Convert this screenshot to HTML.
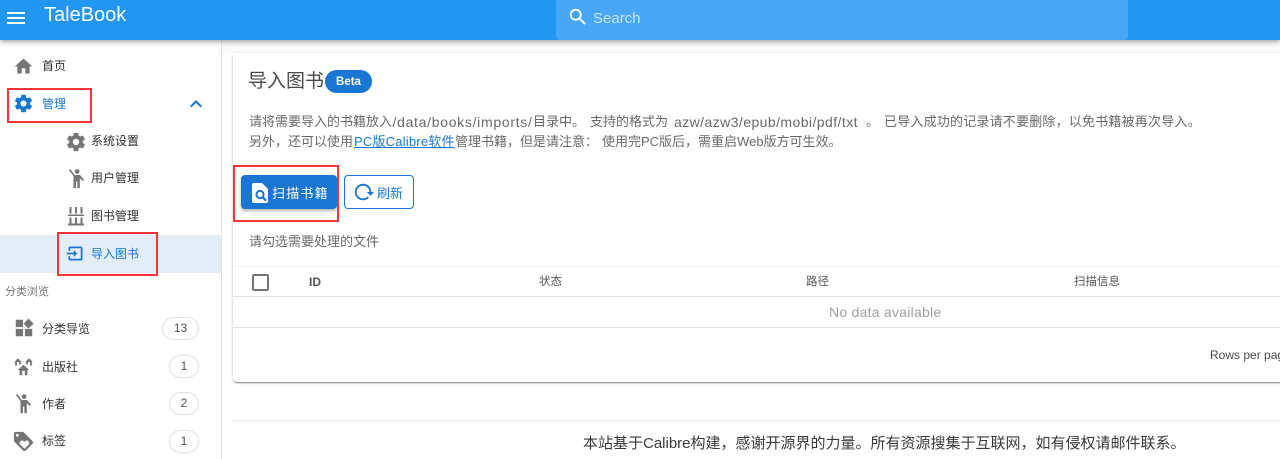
<!DOCTYPE html>
<html lang="zh"><head><meta charset="utf-8"><title>TaleBook</title>
<style>
html,body{margin:0;padding:0;width:1280px;height:459px;overflow:hidden;background:#fff;font-family:"Liberation Sans","Noto Sans CJK SC",sans-serif;}
.a{position:absolute;white-space:nowrap;line-height:1;}
svg.i{position:absolute;width:24px;height:24px;fill:#757575;}
svg.b{fill:#1976d2;}
.t{font-size:12px;color:rgba(0,0,0,.82);}
.tb{font-size:12px;color:#1976d2;}
.c{position:absolute;box-sizing:border-box;border:1px solid #e0e0e0;border-radius:12px;height:23px;line-height:21px;text-align:center;font-size:12px;color:rgba(0,0,0,.7);background:#fff;}
.red{position:absolute;border:2px solid #f33;box-sizing:border-box;}
.th{font-size:11.5px;color:rgba(0,0,0,.68);}
.d{font-size:13px;color:rgba(0,0,0,.6);}
</style></head><body>

<div class="a" style="left:0;top:40px;width:1280px;height:13px;background:#fafafa"></div>

<!-- sidebar -->
<div class="a" style="left:0;top:40px;width:221px;height:419px;background:#fff;border-right:1px solid #e4e4e4"></div>
<div class="a" style="left:0;top:235px;width:221px;height:38px;background:#e3edf8"></div>

<svg class="i" style="left:13px;top:56px;width:21px;height:21px" viewBox="0 0 24 24"><path d="M10,20V14H14V20H19V12H22L12,3L2,12H5V20H10Z"/></svg>
<div class="a t" style="left:42px;top:60px">首页</div>

<svg class="i b" style="left:13px;top:93px;width:21px;height:21px" viewBox="0 0 24 24"><path d="M12,15.5A3.5,3.5 0 0,1 8.5,12A3.5,3.5 0 0,1 12,8.5A3.5,3.5 0 0,1 15.5,12A3.5,3.5 0 0,1 12,15.5M19.43,12.97C19.47,12.65 19.5,12.33 19.5,12C19.5,11.67 19.47,11.34 19.43,11L21.54,9.37C21.73,9.22 21.78,8.95 21.66,8.73L19.66,5.27C19.54,5.05 19.27,4.96 19.05,5.05L16.56,6.05C16.04,5.66 15.5,5.32 14.87,5.07L14.5,2.42C14.46,2.18 14.25,2 14,2H10C9.75,2 9.54,2.18 9.5,2.42L9.13,5.07C8.5,5.32 7.96,5.66 7.44,6.05L4.95,5.05C4.73,4.96 4.46,5.05 4.34,5.27L2.34,8.73C2.21,8.95 2.27,9.22 2.46,9.37L4.57,11C4.53,11.34 4.5,11.67 4.5,12C4.5,12.33 4.53,12.65 4.57,12.97L2.46,14.63C2.27,14.78 2.21,15.05 2.34,15.27L4.34,18.73C4.46,18.95 4.73,19.03 4.95,18.95L7.44,17.94C7.96,18.34 8.5,18.68 9.13,18.93L9.5,21.58C9.54,21.82 9.75,22 10,22H14C14.25,22 14.46,21.82 14.5,21.58L14.87,18.93C15.5,18.67 16.04,18.34 16.56,17.94L19.05,18.95C19.27,19.03 19.54,18.95 19.66,18.73L21.66,15.27C21.78,15.05 21.73,14.78 21.54,14.63L19.43,12.97Z"/></svg>
<div class="a tb" style="left:42px;top:98px">管理</div>
<svg class="i b" style="left:184px;top:92px" viewBox="0 0 24 24"><path d="M7.41,15.41L12,10.83L16.59,15.41L18,14L12,8L6,14L7.41,15.41Z"/></svg>

<svg class="i" style="left:65px;top:131px;width:22px;height:22px" viewBox="0 0 24 24"><path d="M12,15.5A3.5,3.5 0 0,1 8.5,12A3.5,3.5 0 0,1 12,8.5A3.5,3.5 0 0,1 15.5,12A3.5,3.5 0 0,1 12,15.5M19.43,12.97C19.47,12.65 19.5,12.33 19.5,12C19.5,11.67 19.47,11.34 19.43,11L21.54,9.37C21.73,9.22 21.78,8.95 21.66,8.73L19.66,5.27C19.54,5.05 19.27,4.96 19.05,5.05L16.56,6.05C16.04,5.66 15.5,5.32 14.87,5.07L14.5,2.42C14.46,2.18 14.25,2 14,2H10C9.75,2 9.54,2.18 9.5,2.42L9.13,5.07C8.5,5.32 7.96,5.66 7.44,6.05L4.95,5.05C4.73,4.96 4.46,5.05 4.34,5.27L2.34,8.73C2.21,8.95 2.27,9.22 2.46,9.37L4.57,11C4.53,11.34 4.5,11.67 4.5,12C4.5,12.33 4.53,12.65 4.57,12.97L2.46,14.63C2.27,14.78 2.21,15.05 2.34,15.27L4.34,18.73C4.46,18.95 4.73,19.03 4.95,18.95L7.44,17.94C7.96,18.34 8.5,18.68 9.13,18.93L9.5,21.58C9.54,21.82 9.75,22 10,22H14C14.25,22 14.46,21.82 14.5,21.58L14.87,18.93C15.5,18.67 16.04,18.34 16.56,17.94L19.05,18.95C19.27,19.03 19.54,18.95 19.66,18.73L21.66,15.27C21.78,15.05 21.73,14.78 21.54,14.63L19.43,12.97Z"/></svg>
<div class="a t" style="left:91px;top:135px">系统设置</div>

<svg class="i" style="left:66px;top:168px;width:21px;height:21px" viewBox="0 0 24 24"><path d="M4.8,1.2L3.4,2.4L8.6,9.4V23H11.4V15.5H13V23H15.8V11.6L19.2,14.8L20.6,13.4L16,8H9.8ZM12.7,1.4A2.7,2.7 0 1,0 12.71,6.8A2.7,2.7 0 1,0 12.7,1.4Z"/></svg>
<div class="a t" style="left:91px;top:172px">用户管理</div>

<svg class="i" style="left:66px;top:206px;width:20px;height:20px" viewBox="0 0 20 20"><path d="M3.5,1H5.5V7.5H3.5ZM9,1H11V7.5H9ZM14.5,1H16.5V7.5H14.5ZM2,8.5H18V10H2ZM3.5,11.5H5.5V18H3.5ZM9,11.5H11V18H9ZM14.5,11.5H16.5V18H14.5ZM2,17.5H18V19.5H2Z"/></svg>
<div class="a t" style="left:91px;top:210px">图书管理</div>

<svg class="i b" style="left:65px;top:243px;width:21px;height:21px" viewBox="0 0 24 24"><path d="M14,12L10,8V11H2V13H10V16M20,18V6C20,4.89 19.1,4 18,4H6A2,2 0 0,0 4,6V9H6V6H18V18H6V15H4V18A2,2 0 0,0 6,20H18A2,2 0 0,0 20,18Z"/></svg>
<div class="a tb" style="left:91px;top:248px">导入图书</div>

<div class="a" style="left:5px;top:287px;font-size:11px;color:rgba(0,0,0,.55)">分类浏览</div>

<svg class="i" style="left:13px;top:317px;width:22px;height:22px" viewBox="0 0 24 24"><path d="M3,3H11V11H3V3M3,13H11V21H3V13M13,13H21V21H13V13M16.8,1.7L22.5,7.3L16.8,12.5L11.6,7.3Z"/></svg>
<div class="a t" style="left:42px;top:323px">分类导览</div>
<div class="c" style="left:162px;top:317px;width:37px">13</div>

<svg class="i" style="left:13px;top:356px;width:21px;height:21px" viewBox="0 0 24 24"><path d="M18.5,16H16.5V22H13.5V17H10.5V22H7.5V16H5.5L12,10ZM5.5,2.5L10,7H9V9.5H7V7H4.5V11H2.5V7H1.5ZM18.5,2.5L22.5,7H21.5V11H19.5V7H17V9.5H15V7H14Z"/></svg>
<div class="a t" style="left:42px;top:361px">出版社</div>
<div class="c" style="left:169px;top:355px;width:30px">1</div>

<svg class="i" style="left:13px;top:393px;width:21px;height:21px" viewBox="0 0 24 24"><path d="M4.8,1.2L3.4,2.4L8.6,9.4V23H11.4V15.5H13V23H15.8V11.6L19.2,14.8L20.6,13.4L16,8H9.8ZM12.7,1.4A2.7,2.7 0 1,0 12.71,6.8A2.7,2.7 0 1,0 12.7,1.4Z"/></svg>
<div class="a t" style="left:42px;top:398px">作者</div>
<div class="c" style="left:169px;top:392px;width:30px">2</div>

<svg class="i" style="left:12px;top:430px;width:23px;height:23px" viewBox="0 0 24 24"><path d="M21.41,11.58L12.41,2.58A2,2 0 0,0 11,2H4A2,2 0 0,0 2,4V11A2,2 0 0,0 2.59,12.42L11.59,21.42A2,2 0 0,0 13,22A2,2 0 0,0 14.41,21.41L21.41,14.41A2,2 0 0,0 22,13A2,2 0 0,0 21.41,11.58M5.5,7A1.5,1.5 0 1,1 7,5.5A1.5,1.5 0 0,1 5.5,7M17.27,15.27L13,19.54L8.73,15.27A2.5,2.5 0 0,1 12.27,11.73L13,12.46L13.73,11.73A2.5,2.5 0 0,1 17.27,15.27Z"/></svg>
<div class="a t" style="left:42px;top:435px">标签</div>
<div class="c" style="left:169px;top:430px;width:30px">1</div>

<!-- card -->
<div class="a" style="left:233px;top:53px;width:1060px;height:329px;background:#fff;border-radius:4px;box-shadow:0 2px 1px -1px rgba(0,0,0,.3),0 1px 2px rgba(0,0,0,.25),0 0 2px rgba(0,0,0,.08)"></div>

<div class="a" style="left:248px;top:72px;font-size:19px;color:rgba(0,0,0,.72)">导入图书</div>
<div class="a" style="left:325px;top:70px;width:47px;height:23px;border-radius:12px;background:#1976d2;color:#fff;font-size:11.5px;font-weight:700;line-height:24px;text-align:center">Beta</div>

<div class="a d" style="left:249px;top:115px">请将需要导入的书籍放入</div>
<div class="a d" style="left:392.5px;top:115px;letter-spacing:.7px;font-size:14px">/data/books/imports/</div>
<div class="a d" style="left:533px;top:115px">目录中。</div>
<div class="a d" style="left:590px;top:115px">支持的格式为</div>
<div class="a d" style="left:674px;top:115px;font-size:14px;letter-spacing:.43px">azw/azw3/epub/mobi/pdf/txt</div>
<div class="a d" style="left:866px;top:115px">。</div>
<div class="a d" style="left:884px;top:115px;letter-spacing:.2px">已导入成功的记录请不要删除，以免书籍被再次导入。</div>

<div class="a d" style="left:249px;top:135px">另外，还可以使用</div>
<div class="a d" style="left:354px;top:135px;color:#1976d2;text-decoration:underline;letter-spacing:.2px">PC版Calibre软件</div>
<div class="a d" style="left:455px;top:135px">管理书籍，但是请注意：</div>
<div class="a d" style="left:602px;top:135px">使用完PC版后，需重启Web版方可生效。</div>

<!-- buttons -->
<div class="a" style="left:241px;top:175px;width:96px;height:34px;border-radius:4px;background:#1976d2;box-shadow:0 2px 3px rgba(0,0,0,.3)"></div>
<svg class="i" style="left:248px;top:181px" viewBox="0 0 24 24"><path fill="#fff" d="M14,2H6A2,2 0 0,0 4,4V20A2,2 0 0,0 6,22H18A2,2 0 0,0 20,20V8Z"/><circle cx="12" cy="13.5" r="3.6" fill="none" stroke="#1976d2" stroke-width="2"/><path d="M14.6,16.2L18,19.6" stroke="#1976d2" stroke-width="2.2" fill="none"/></svg>
<div class="a" style="left:272px;top:187px;font-size:13px;color:#fff;letter-spacing:1.2px">扫描书籍</div>

<div class="a" style="left:344px;top:175px;width:68px;height:32px;border:1px solid #1976d2;border-radius:4px;background:#fff"></div>
<svg class="i b" style="left:353px;top:181px;width:22px;height:22px" viewBox="0 0 24 24"><path d="M2,12C2,16.97 6.03,21 11,21C13.39,21 15.68,20.06 17.4,18.4L15.9,16.9C14.63,18.25 12.86,19 11,19C4.76,19 1.64,11.46 6.05,7.05C10.46,2.64 18,5.77 18,12H15L19,16H19.1L23,12H20C20,7.03 15.97,3 11,3C6.03,3 2,7.03 2,12Z"/></svg>
<div class="a" style="left:377px;top:187px;font-size:13px;color:#1976d2">刷新</div>

<div class="a d" style="left:249px;top:235px">请勾选需要处理的文件</div>

<!-- table -->
<div class="a" style="left:233px;top:266px;width:1047px;height:1px;background:#f3f3f3"></div>
<div class="a" style="left:233px;top:296px;width:1047px;height:1px;background:#e0e0e0"></div>
<div class="a" style="left:233px;top:327px;width:1047px;height:1px;background:#e0e0e0"></div>
<div class="a" style="left:252px;top:274px;width:13px;height:13px;border:2px solid #757575;border-radius:2px"></div>
<div class="a th" style="left:309px;top:276px;font-weight:700;font-size:12px">ID</div>
<div class="a th" style="left:539px;top:277px">状态</div>
<div class="a th" style="left:806px;top:277px">路径</div>
<div class="a th" style="left:1074px;top:277px">扫描信息</div>
<div class="a" style="left:829px;top:305px;font-size:14px;letter-spacing:.25px;color:rgba(0,0,0,.38)">No data available</div>
<div class="a" style="left:1210px;top:349px;font-size:12px;color:rgba(0,0,0,.72)">Rows per page</div>

<!-- footer -->
<div class="a" style="left:233px;top:420px;width:1047px;height:1px;background:#e8e8e8"></div>
<div class="a" style="left:583px;top:436px;font-size:15px;color:rgba(0,0,0,.78)">本站基于Calibre构建，感谢开源界的力量。所有资源搜集于互联网，如有侵权请邮件联系。</div>

<!-- app bar -->
<div class="a" style="left:0;top:0;width:1280px;height:40px;background:#2196f3;box-shadow:0 2px 4px -1px rgba(0,0,0,.3),0 4px 5px rgba(0,0,0,.1)"></div>
<svg class="i" style="left:4px;top:6px;fill:#fff" viewBox="0 0 24 24"><path d="M3,6H21V8H3V6M3,11H21V13H3V11M3,16H21V18H3V16Z"/></svg>
<div class="a" style="left:44px;top:5px;font-size:20px;color:#fff">TaleBook</div>
<div class="a" style="left:556px;top:0;width:572px;height:40px;background:#47a6f6;border-radius:0 0 4px 4px"></div>
<svg class="i" style="left:567px;top:6px;fill:#fff;width:22px;height:22px" viewBox="0 0 24 24"><path d="M9.5,3A6.5,6.5 0 0,1 16,9.5C16,11.11 15.41,12.59 14.44,13.73L14.71,14H15.5L20.5,19L19,20.5L14,15.5V14.71L13.73,14.44C12.59,15.41 11.11,16 9.5,16A6.5,6.5 0 0,1 3,9.5A6.5,6.5 0 0,1 9.5,3M9.5,5C7,5 5,7 5,9.5C5,12 7,14 9.5,14C12,14 14,12 14,9.5C14,7 12,5 9.5,5Z"/></svg>
<div class="a" style="left:593px;top:11px;font-size:15px;color:rgba(255,255,255,.7)">Search</div>

<!-- red annotation boxes -->
<div class="red" style="left:7px;top:88px;width:85px;height:35px"></div>
<div class="red" style="left:57px;top:232px;width:101px;height:44px"></div>
<div class="red" style="left:233px;top:165px;width:106px;height:57px"></div>
</body></html>
